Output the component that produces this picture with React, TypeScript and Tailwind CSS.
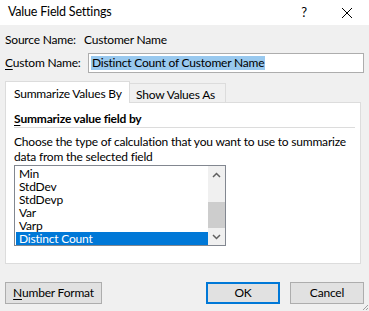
import React from "react";

const items = ["Min", "StdDev", "StdDevp", "Var", "Varp", "Distinct Count"];

export default function App() {
  return (
    <div
      className="relative w-[369px] h-[311px] bg-[#f0f0f0] text-[12px] tracking-[-0.2px] text-black overflow-hidden whitespace-nowrap"
      style={{ fontFamily: 'Lato, "Noto Sans", sans-serif' }}
    >
      {/* Title bar */}
      <div className="h-[25px] bg-white flex items-center">
        <div className="pl-[8px] flex-1 leading-none text-[12.5px]">Value Field Settings</div>
        <div className="w-[14px] mr-[30px] text-center text-[13px] leading-none">?</div>
        <svg width="12" height="12" viewBox="0 0 12 12" className="mr-[16px]">
          <path d="M1 1 L11 11 M11 1 L1 11" stroke="#000" strokeWidth="1" fill="none" />
        </svg>
      </div>

      {/* Source */}
      <div className="mt-[7px] pl-[5px] flex h-[16px] items-center">
        <span className="w-[79px]">Source Name:</span>
        <span>Customer Name</span>
      </div>

      {/* Custom name */}
      <div className="mt-[5px] pl-[5px] flex items-center h-[20px]">
        <span className="w-[83px]">
          <span className="underline underline-offset-2">C</span>ustom Name:
        </span>
        <div className="w-[276px] h-[20px] bg-white border border-[#adadad] flex items-center pl-[2px]">
          <span className="bg-[#99c9ef] leading-[14px] px-px">Distinct Count of Customer Name</span>
        </div>
      </div>

      {/* Tabs */}
      <div className="mt-[8px] ml-[5px] flex items-end h-[21px] relative z-10">
        <div className="w-[125px] h-[22px] bg-white border border-b-0 border-[#dcdcdc] pl-[8px] pt-[3px] -mb-px">
          Summarize Values By
        </div>
        <div className="w-[96px] h-[19px] border border-l-0 border-b-0 border-[#dcdcdc] pl-[6px] pt-[2px]">
          Show Values As
        </div>
      </div>

      {/* Panel */}
      <div className="ml-[5px] w-[356px] h-[162px] bg-white border border-[#dcdcdc] pl-[8px] pr-[5px]">
        <div className="mt-[9px] font-bold h-[14px] flex items-center">
          <span className="underline underline-offset-2">S</span>ummarize value field by
        </div>
        <div className="mt-[1px] h-px bg-[#dcdcdc]"></div>
        <div className="mt-[6px] leading-[15px]">
          Choose the type of calculation that you want to use to summarize
          <br />
          data from the selected field
        </div>
        <div className="mt-[1px] w-[212px] h-[81px] border border-[#828790] flex">
          <div className="flex-1 pt-px pl-px">
            {items.map((it) => (
              <div
                key={it}
                className={
                  "h-[13px] leading-[13px] pl-[3px] " +
                  (it === "Distinct Count" ? "bg-[#0078d7] text-white" : "")
                }
              >
                {it}
              </div>
            ))}
          </div>
          <div className="w-[17px] bg-[#f0f0f0] flex flex-col">
            <div className="h-[17px] flex items-center justify-center">
              <svg width="9" height="6" viewBox="0 0 9 6">
                <path d="M1 5 L4.5 1.5 L8 5" stroke="#606060" strokeWidth="1.5" fill="none" />
              </svg>
            </div>
            <div className="flex-1 flex flex-col justify-end">
              <div className="h-[26px] bg-[#cdcdcd]"></div>
            </div>
            <div className="h-[17px] flex items-center justify-center">
              <svg width="9" height="6" viewBox="0 0 9 6">
                <path d="M1 1 L4.5 4.5 L8 1" stroke="#606060" strokeWidth="1.5" fill="none" />
              </svg>
            </div>
          </div>
        </div>
      </div>

      {/* Buttons */}
      <div className="mt-[18px] flex px-[5px]">
        <button className="w-[97px] h-[22px] bg-[#e1e1e1] border border-[#adadad] flex items-center justify-center">
          <span><span className="underline underline-offset-2">N</span>umber Format</span>
        </button>
        <div className="flex-1" />
        <button className="w-[74px] h-[22px] bg-[#e1e1e1] border-2 border-[#0078d7] flex items-center justify-center">
          OK
        </button>
        <button className="ml-[10px] w-[74px] h-[22px] bg-[#e1e1e1] border border-[#adadad] flex items-center justify-center">
          Cancel
        </button>
      </div>

      {/* Resize grip */}
      <svg width="8" height="8" viewBox="0 0 8 8" className="absolute right-0 bottom-0">
        <path d="M7 2 L2 7 M7 5 L5 7" stroke="#a0a0a0" strokeWidth="1" />
      </svg>
    </div>
  );
}
